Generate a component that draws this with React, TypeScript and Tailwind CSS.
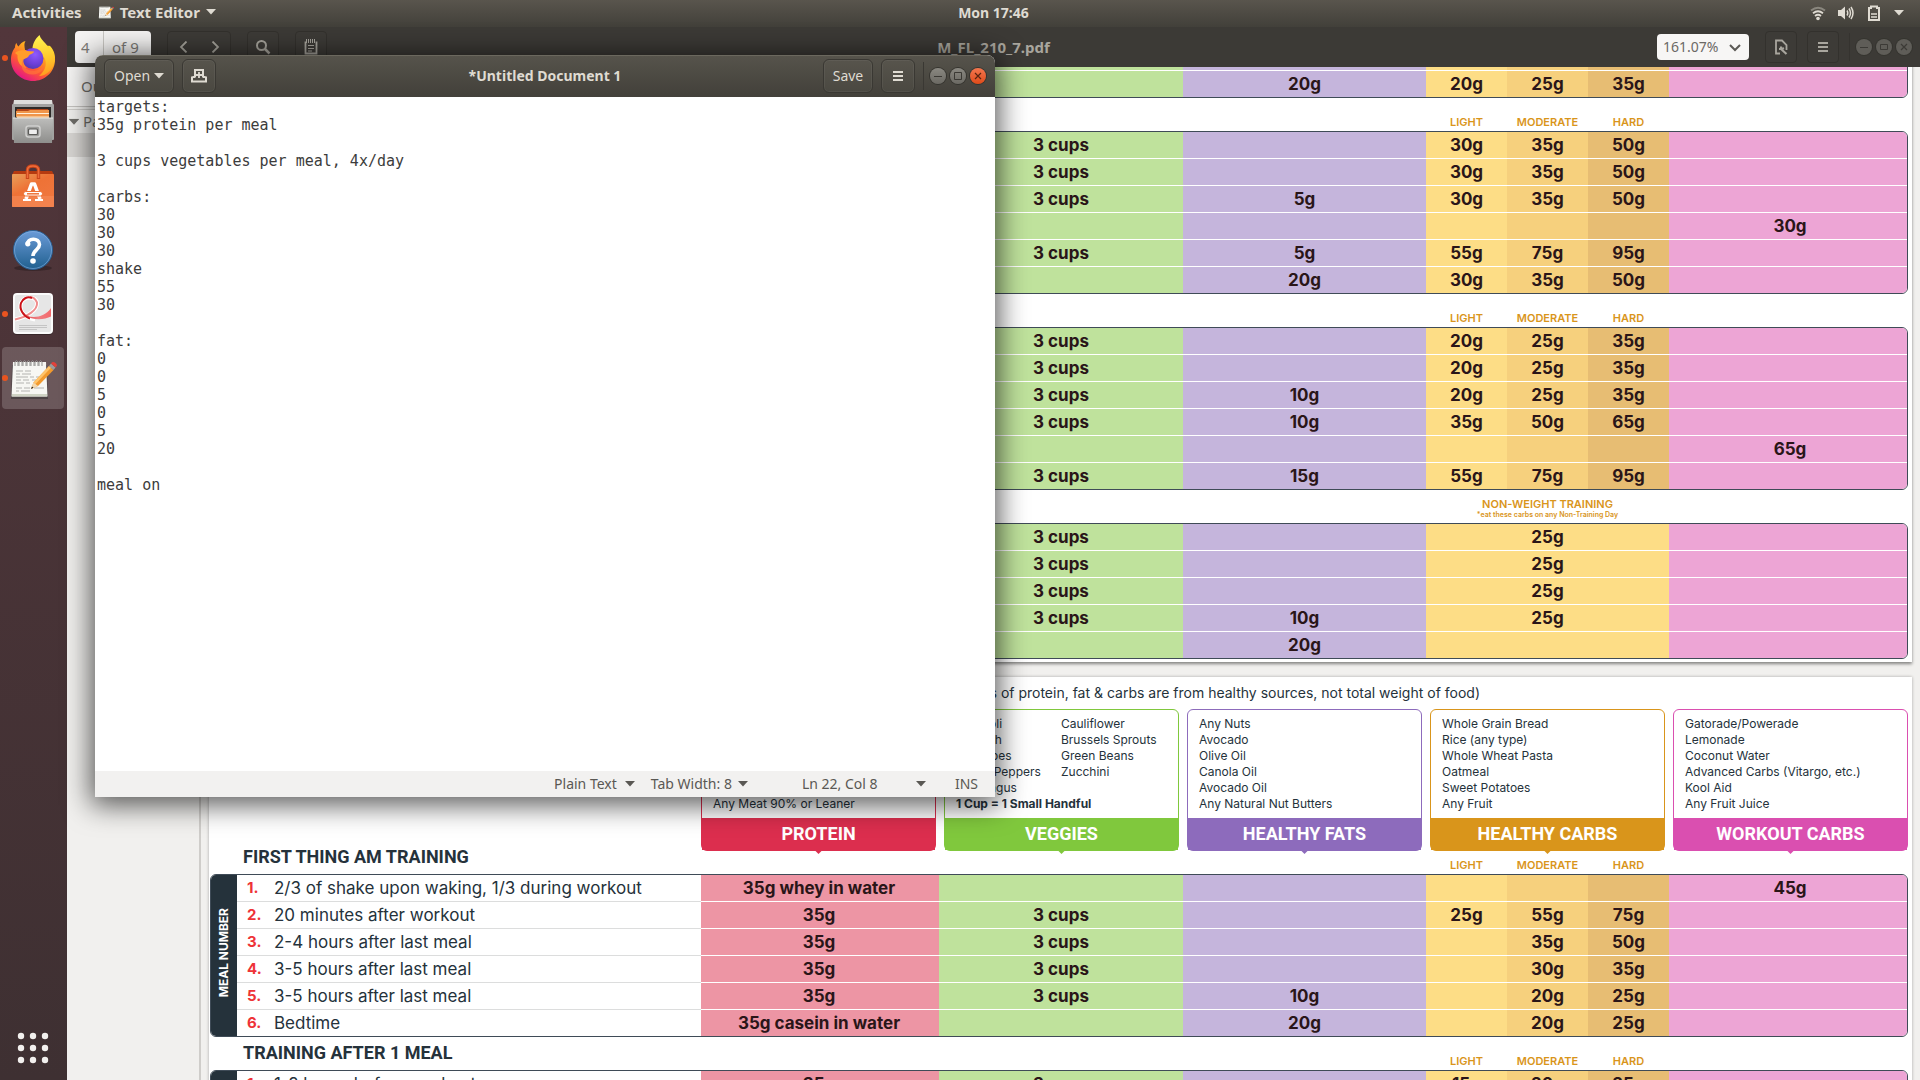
import React from "react";

const COLS =
  "grid-cols-[27px_minmax(0,1fr)_238px_244px_243px_81px_81px_81px_239px]";
const DISPLAY = "font-['Roboto',sans-serif] font-bold text-lg";

/* ---------- small shared pieces ---------- */

function Caret({ className = "" }: { className?: string }) {
  return (
    <svg viewBox="0 0 10 6" className={`h-1.5 w-2.5 ${className}`} aria-hidden="true">
      <path d="M0 0h10L5 5.500z" fill="currentColor" />
    </svg>
  );
}

function Menu() {
  return (
    <svg viewBox="0 0 10 10" className="size-2.5" aria-hidden="true">
      <path d="M0 0h10v2H0zM0 4h10v2H0zM0 8h10v2H0z" fill="currentColor" />
    </svg>
  );
}

function WindowButtons({ active }: { active: boolean }) {
  const dim = "bg-[#5f5d58] text-[#3c3a36] shadow-[0_0_0_1px_#35342f]";
  const lit = "bg-linear-to-b from-[#8a8881] to-[#6b6963] text-[#3b3934] shadow-[0_0_0_1px_#35342f]";
  const close = "bg-linear-to-b from-[#f4764d] to-[#df4a16] text-[#5b2410] shadow-[0_0_0_1px_#35342f]";
  const base = "flex size-4 items-center justify-center rounded-full";
  return (
    <div className="flex items-center gap-1">
      <button aria-label="Minimize" className={`${base} ${active ? lit : dim}`}>
        <svg viewBox="0 0 16 16" className="size-4" fill="none" stroke="currentColor">
          <path d="M4 8.500h8" />
        </svg>
      </button>
      <button aria-label="Maximize" className={`${base} ${active ? lit : dim}`}>
        <svg viewBox="0 0 16 16" className="size-4" fill="none" stroke="currentColor">
          {active ? <path d="M4.500 4.500h7v7h-7z" /> : <path d="M4.500 5.500h7v5h-7z" />}
        </svg>
      </button>
      <button aria-label="Close" className={`${base} ${active ? close : dim}`}>
        <svg viewBox="0 0 16 16" className="size-4" fill="none" stroke="currentColor" strokeWidth="1.200">
          <path d="M5 5l6 6M11 5l-6 6" />
        </svg>
      </button>
    </div>
  );
}

/* ---------- application icons ---------- */

function FirefoxIcon() {
  return (
    <svg viewBox="0 0 46 48" className="h-12 w-[46px]" aria-hidden="true">
      <defs>
        <linearGradient id="fxBody" x1="0.85" y1="0.1" x2="0.25" y2="0.95">
          <stop offset="0" stopColor="#ffe226" />
          <stop offset="0.35" stopColor="#ffa01f" />
          <stop offset="0.65" stopColor="#ff5a32" />
          <stop offset="1" stopColor="#e31587" />
        </linearGradient>
        <linearGradient id="fxFlame" x1="0.5" y1="0" x2="0.6" y2="1">
          <stop offset="0" stopColor="#fff44f" />
          <stop offset="0.6" stopColor="#ffc52b" />
          <stop offset="1" stopColor="#ff9a20" />
        </linearGradient>
        <radialGradient id="fxGlobe" cx="0.6" cy="0.3" r="0.8">
          <stop offset="0" stopColor="#9059ff" />
          <stop offset="0.6" stopColor="#6b3fd6" />
          <stop offset="1" stopColor="#4a3aa8" />
        </radialGradient>
      </defs>
      <path
        d="M1 26C1 20 3 16 5 13.500c0-2 .5-3.500 1.500-4.500.3 1.500 1 2.600 2 3.500 1.500-2.500 4-5 7-5.500-1 1.500-1.200 3-1 5.500l14-2 11.500 1.500c4 4 5.500 9 5 15-.8 11.500-10.500 20-22 20S1 38 1 26z"
        fill="url(#fxBody)"
      />
      <path d="M14.500 12.500C19 9 26 8 30 11l-2 5H15z" fill="#52363b" />
      <path
        d="M29.500 1c1 3.500 3.500 5.500 6 8.500 1.500 1.500 2.500 3.500 2.900 5 .6-.8.8-2 .6-3 4 4 6 9 5.500 15C43.500 36 36 42 29 42c6-5 8-11 6-17-2-5-8-7-12.500-8C22 10 25.500 4.500 29.500 1z"
        fill="url(#fxFlame)"
      />
      <circle cx="23" cy="24.500" r="10.500" fill="url(#fxGlobe)" />
      <path
        d="M5 19c3-3 8-3.500 12-2 2 .2 4.500.3 7 .5 0 2-4 2.600-5 4-.5 2-3 2.500-5.500 4-.7 3 .5 6 3 8.500C10 33 7 27 7.500 21z"
        fill="#ff9d2b"
      />
      <path d="M13 25c-1 8 5 13 13 11.500 4-.8 6-3 7-5.500 1 5-3 9-10 9.500C14 41 9 34 13 25z" fill="#ff7139" opacity=".75" />
    </svg>
  );
}

function FilesIcon() {
  return (
    <svg viewBox="0 0 44 46" className="h-[46px] w-11" aria-hidden="true">
      <defs>
        <linearGradient id="flBody" x1="0" y1="0" x2="0" y2="1">
          <stop offset="0" stopColor="#bdbdbb" />
          <stop offset="1" stopColor="#8e8e8c" />
        </linearGradient>
      </defs>
      <path d="M3 1h38l1 6H2z" fill="#dededc" />
      <rect x="1" y="5" width="42" height="36" rx="1" fill="#a3a3a1" />
      <rect x="4" y="8" width="36" height="12" fill="#2d2b29" />
      <path d="M6 10h31l1 3H5z" fill="#b2471a" />
      <path d="M5 12h12l2-1h19v7H5z" fill="#f0954a" />
      <path d="M6 14h32v1H6z" fill="#fff1dc" />
      <path d="M6 17h32v2H6z" fill="#f5c08a" />
      <path d="M2 19h40v1l-1 24H3z" fill="url(#flBody)" />
      <path d="M2 18.500h40v1H2z" fill="#e3e3e1" />
      <rect x="15" y="27" width="14" height="11" rx="2.500" fill="#9b9b99" stroke="#d0d0ce" strokeWidth="1.500" />
      <rect x="17.500" y="30" width="9" height="5.500" rx="1" fill="#eee" stroke="#5b5b59" strokeWidth="1.200" />
    </svg>
  );
}

function SoftwareIcon() {
  return (
    <svg viewBox="0 0 44 46" className="h-[46px] w-11" aria-hidden="true">
      <defs>
        <linearGradient id="swBody" x1="0" y1="0" x2="0.7" y2="1">
          <stop offset="0" stopColor="#e9a05a" />
          <stop offset="0.45" stopColor="#ee7236" />
          <stop offset="1" stopColor="#f0773f" />
        </linearGradient>
      </defs>
      <path d="M3 8h38l2 4H1z" fill="#b63a10" />
      <rect x="1" y="11" width="42" height="33" rx="1" fill="url(#swBody)" />
      <path d="M1 33h42v11H1z" fill="#f58a58" opacity=".6" />
      <path d="M16.500 16V7q0-4 5.500-4t5.500 4v9" fill="none" stroke="#c8451a" strokeWidth="3.400" />
      <path d="M16.500 15V7q0-4 5.500-4t5.500 4v8" fill="none" stroke="#ef6c3a" strokeWidth="1.500" />
      <path d="M15 36l5.500-15h3L29 36" fill="none" stroke="#fff" strokeWidth="3.600" strokeLinejoin="round" />
      <rect x="12.500" y="28.500" width="19" height="4.500" rx="2.200" fill="#fff" stroke="#ee7236" />
      <path d="M16 30.800h12" stroke="#ee7236" strokeWidth="1.500" />
      <path d="M12 37h8M24 37h8" stroke="#fff" strokeWidth="2" />
    </svg>
  );
}

function HelpIcon() {
  return (
    <svg viewBox="0 0 44 44" className="size-11" aria-hidden="true">
      <defs>
        <linearGradient id="hpBody" x1="0" y1="0" x2="0" y2="1">
          <stop offset="0" stopColor="#6b9bd8" />
          <stop offset="1" stopColor="#20608f" />
        </linearGradient>
      </defs>
      <ellipse cx="22" cy="40" rx="19" ry="3" fill="#000" opacity=".25" />
      <circle cx="22" cy="22" r="19.500" fill="url(#hpBody)" stroke="#2a5f92" />
      <circle cx="22" cy="22" r="18.500" fill="none" stroke="#8bb6e6" strokeWidth=".8" opacity=".7" />
      <path d="M16.500 16.500c-.8-6.500 12-7.500 12 0 0 5.200-6.500 5.500-6.500 11.500" fill="none" stroke="#fff" strokeWidth="3.600" />
      <circle cx="16.800" cy="15.800" r="2.600" fill="#fff" />
      <circle cx="22" cy="33" r="2.800" fill="#fff" />
    </svg>
  );
}

function ViewerIcon() {
  return (
    <svg viewBox="0 0 44 44" className="size-11" aria-hidden="true">
      <defs>
        <linearGradient id="pdRibbon" x1="0" y1="0" x2="1" y2="0">
          <stop offset="0" stopColor="#e0474b" />
          <stop offset=".5" stopColor="#ee7f82" />
          <stop offset="1" stopColor="#f4696c" />
        </linearGradient>
      </defs>
      <rect x="2" y="2" width="40" height="41" rx="4" fill="#2a1e20" opacity=".6" />
      <rect x="2" y="1" width="40" height="41" rx="4" fill="#fbfbfb" />
      <rect x="4" y="3" width="36" height="37" rx="2" fill="#e6e6e6" />
      <path
        d="M4 27.500C16 25 27 18 26 10.500 24.500 4 13 4 10 11c-2.500 7 3 15 14 16.500"
        fill="none"
        stroke="#fff"
        strokeWidth="4"
      />
      <path d="M4 27.500C16 25 27 18 26 10.500 24.500 7 22 5 19 5" fill="none" stroke="#f08d8d" strokeWidth="2" />
      <path d="M21 6C16 4 11.500 7 10 11c-2 6 2 13 9 15.500" fill="none" stroke="#cc1218" strokeWidth="2" />
      <path d="M14 23c8 4 20 2 26-7v8.500c-7 3.500-19 4-26-1.500z" fill="url(#pdRibbon)" />
      <path d="M8 33.500h28M8 35.500h28M8 37.500h18" stroke="#c4c4c4" />
    </svg>
  );
}

function EditorIcon({ className = "size-12" }: { className?: string }) {
  return (
    <svg viewBox="0 0 48 48" className={className} aria-hidden="true">
      <path d="M3 11h35l1 34H2z" fill="#333" opacity=".55" />
      <path d="M4 8h33l1.500 34.500H2.500z" fill="#f7f7f3" />
      <path d="M3 40h35v2.500H3z" fill="#cfd3c4" />
      <path
        d="M7 17h7m2 0h6M7 20h4m2 0h9M7 23h12m2 0h4m2 0h5M7 26h5m2 0h6m3 0h4M7 29h8m2 0h4M7 34h6m2 0h6m4 0h10M7 37h3m2 0h9"
        stroke="#b3b3b0"
      />
      <path
        d="M6 12V8q1.500-3 3 0v4M10 12V8q1.500-3 3 0v4M14 12V8q1.500-3 3 0v4M18 12V8q1.500-3 3 0v4M22 12V8q1.500-3 3 0v4M26 12V8q1.500-3 3 0v4M30 12V8q1.500-3 3 0v4"
        fill="none"
        stroke="#8f8f8c"
      />
      <path d="M22 35l2.500-6.500L40 12l4.500 4L29 32z" fill="#f29a2e" />
      <path d="M24.500 28.500L40 12l2 1.700L26.500 30z" fill="#ffc46a" />
      <path d="M22 35l2.500-6.500L29 32z" fill="#f3d9b0" />
      <path d="M22 35l1-2.500 1.500 1.300z" fill="#222" />
      <path d="M40 12l2-2.500 4.500 4-2 2.500z" fill="#9c9c9c" />
      <path d="M42 9.500q2-2.500 4.500-.5t.2 4.500z" fill="#e3413a" />
    </svg>
  );
}

/* ---------- desktop chrome ---------- */

function TopBar() {
  return (
    <header className="grid h-[27px] shrink-0 grid-cols-[67px_1fr_auto_1fr] items-center bg-linear-to-b from-[#59554d] to-[#42403a] pb-0.5 text-sm font-bold text-[#dfdbd2]">
      <div className="col-span-2 flex items-center pl-3 text-[15px]">
        <button>Activities</button>
        <button className="ml-4 flex items-center gap-1.5">
          <EditorIcon className="size-4" />
          <span>Text Editor</span>
          <Caret />
        </button>
      </div>
      <button className="px-2">Mon 17:46</button>
      <button aria-label="System menu" className="flex items-center gap-3 justify-self-end pr-4">
        <svg viewBox="0 0 16 16" className="size-4" fill="none" stroke="currentColor" strokeWidth="1.800">
          <path d="M1 5.500q7-5.500 14 0" opacity=".4" />
          <path d="M3 8.200q5-4 10 0" />
          <path d="M5 11q3-2.400 6 0" />
          <circle cx="8" cy="13.500" r="1.800" fill="currentColor" stroke="none" />
        </svg>
        <svg viewBox="0 0 16 16" className="size-4" fill="none" stroke="currentColor" strokeWidth="1.500">
          <path d="M0 5h3l4-3.500v13L3 11H0z" fill="currentColor" stroke="none" />
          <path d="M9 5.500q1.500 2.500 0 5M11 3.500q3 4.500 0 9M13 2q4 6 0 12" />
        </svg>
        <svg viewBox="0 0 16 16" className="size-4" fill="none" stroke="currentColor">
          <path d="M3 3h2V1.500h6V3h2v12H3z" strokeWidth="2" />
          <path d="M5 9h6M5 12h6" strokeWidth="1.500" />
        </svg>
        <Caret />
      </button>
    </header>
  );
}

const DOCK = [
  { name: "Firefox Web Browser", icon: <FirefoxIcon />, running: true },
  { name: "Files", icon: <FilesIcon />, running: false },
  { name: "Ubuntu Software", icon: <SoftwareIcon />, running: false },
  { name: "Help", icon: <HelpIcon />, running: false },
  { name: "Document Viewer", icon: <ViewerIcon />, running: true },
  { name: "Text Editor", icon: <EditorIcon />, running: true, active: true },
];

function Dock() {
  return (
    <nav aria-label="Dock" className="flex w-[67px] shrink-0 flex-col gap-0.5 bg-linear-to-b from-[#52363b] to-[#3e3032] px-0.5">
      {DOCK.map((app) => (
        <button
          key={app.name}
          aria-label={app.name}
          className={`flex h-[62px] w-[62px] items-center rounded ${app.active ? "bg-white/18" : ""}`}
        >
          <span className={`-mr-1.5 size-1.5 shrink-0 rounded-full ${app.running ? "bg-[#e95420]" : ""}`} />
          <span className="flex flex-1 justify-center">{app.icon}</span>
        </button>
      ))}
      <button aria-label="Show Applications" className="mt-auto flex h-16 w-[62px] items-center justify-center">
        <svg viewBox="0 0 32 32" className="size-8" fill="#f2f0ee">
          {[4, 16, 28].map((y) =>
            [4, 16, 28].map((x) => <circle key={`${x}-${y}`} cx={x} cy={y} r="3.200" />)
          )}
        </svg>
      </button>
    </nav>
  );
}

/* ---------- document viewer ---------- */

function ViewerHeader() {
  const btn =
    "flex h-8 items-center justify-center rounded border border-[#33312d] bg-[#3d3b37] text-[#a9a69e]";
  return (
    <div className="grid h-10 shrink-0 grid-cols-[1fr_auto_1fr] items-center bg-[#3c3a36] px-2">
      <div className="flex items-center">
        <div className="flex h-8 w-[76px] items-center rounded bg-[#f4f3f2] text-[15px] text-[#7d7b77]">
          <input
            aria-label="Page"
            defaultValue="4"
            className="h-full w-[29px] border-r border-[#c9c7c3] pl-1.5 outline-none"
          />
          <span className="pl-2">of 9</span>
        </div>
        <div className={`ml-4 w-16 ${btn}`}>
          <button aria-label="Previous page" className="flex flex-1 justify-center">
            <svg viewBox="0 0 12 12" className="size-3" fill="none" stroke="currentColor" strokeWidth="1.800">
              <path d="M8.500.5L3 6l5.500 5.500" />
            </svg>
          </button>
          <button aria-label="Next page" className="flex flex-1 justify-center">
            <svg viewBox="0 0 12 12" className="size-3" fill="none" stroke="currentColor" strokeWidth="1.800">
              <path d="M3.500.5L9 6l-5.500 5.500" />
            </svg>
          </button>
        </div>
        <button aria-label="Find" className={`ml-4 w-8 ${btn}`}>
          <svg viewBox="0 0 16 16" className="size-4" fill="none" stroke="currentColor" strokeWidth="2">
            <circle cx="6.500" cy="6.500" r="4.500" />
            <path d="M10 10l4.500 4.500" strokeWidth="2.500" />
          </svg>
        </button>
        <button aria-label="Annotate" className={`ml-4 w-8 ${btn}`}>
          <svg viewBox="0 0 16 18" className="h-[18px] w-4" fill="none" stroke="currentColor">
            <path d="M2.500 3.500v12h11v-12" strokeWidth="1.800" />
            <path d="M3.500 1v4M5.500 1v4M7.500 1v4M9.500 1v4M11.500 1v4M5 7.500h6M5 10.500h6M5 13h4" />
          </svg>
        </button>
      </div>
      <h1 className="text-[15px] font-bold text-[#a9a69e]">M_FL_210_7.pdf</h1>
      <div className="flex items-center justify-self-end">
        <div className="relative">
          <select
            aria-label="Zoom"
            className="h-[26px] w-[92px] appearance-none rounded bg-[#f7f6f5] pl-1.5 text-sm text-[#6b6965] outline-none"
          >
            <option>161.07%</option>
          </select>
          <svg viewBox="0 0 12 8" className="pointer-events-none absolute top-2.5 right-2 h-2 w-3" fill="none" stroke="#5b5955" strokeWidth="2">
            <path d="M1 1l5 5 5-5" />
          </svg>
        </div>
        <button aria-label="Document properties" className={`ml-4 w-8 ${btn}`}>
          <svg viewBox="0 0 16 16" className="size-4" fill="none" stroke="currentColor">
            <path d="M7 14.500H3V1.500h6l4.500 4.500v5" strokeWidth="1.800" />
            <path d="M8 7.500v2.500h-2M8 10l5.500 5" strokeWidth="2.200" />
            <path d="M9.500 8.500l1 2" strokeWidth="2" />
          </svg>
        </button>
        <button aria-label="Viewer menu" className={`mr-2.5 ml-2.5 w-8 ${btn}`}>
          <Menu />
        </button>
        <div className="mr-1.5 h-7 w-px bg-[#35332f]" />
        <WindowButtons active={false} />
      </div>
    </div>
  );
}

function ViewerSidebar() {
  return (
    <aside className="w-[134px] shrink-0 border-r-2 border-[#cfcdca] bg-[#f1f0ee] text-[15px] text-[#6f6d69]">
      <div className="flex h-10 items-center border-b border-[#c5c3c0] bg-[#f6f5f4] pl-3.5">Outline</div>
      <div className="mt-0.5 flex h-6 items-center gap-1 border-t border-[#cfcdca] pl-0.5">
        <Caret className="scale-110" />
        <span>Pages</span>
      </div>
      <div className="h-6 bg-[#d9d7d4]" />
    </aside>
  );
}

/* Carb cells are ordered light, moderate, hard; a single-column plan uses only the first. */
type Row = { meal?: string; protein?: string; veg?: boolean; fat?: string; carbs: string[]; workout?: string };

function PlanTable({ label, rows, single = false }: { label: string; rows: Row[]; single?: boolean }) {
  const shades = ["bg-[#fddd86]", "bg-[#f6d07d]", "bg-[#e7bd73]"];
  return (
    <div className="overflow-hidden rounded-md border border-[#3f4b57]">
      <table aria-label={label} className="w-full table-fixed border-separate border-spacing-0 text-center text-[17px]/[24px] font-bold text-[#2a1518]">
        <colgroup>
          <col className="w-[26px]" />
          <col />
          <col className="w-[238px]" />
          <col className="w-[244px]" />
          <col className="w-[243px]" />
          <col className="w-[81px]" />
          <col className="w-[81px]" />
          <col className="w-[81px]" />
          <col className="w-[238px]" />
        </colgroup>
        <tbody>
          {rows.map((r, i) => {
            const last = i === rows.length - 1;
            const line = last ? "" : "border-b border-white";
            return (
              <tr key={i} className={last ? "h-[26px]" : "h-[27px]"}>
                {i === 0 && (
                  <th rowSpan={rows.length} className="bg-[#25323b] p-0 align-middle">
                    {rows.length > 2 && (
                      <span className="inline-block rotate-180 text-xs/[26px] font-bold whitespace-nowrap text-white [writing-mode:vertical-rl]">
                        MEAL NUMBER
                      </span>
                    )}
                  </th>
                )}
                <td className={`bg-white p-0 pl-2.5 text-left font-normal text-[#25323b] ${last ? "" : "border-b border-[#dcdddd]"}`}>
                  {r.meal && (
                    <div className="flex">
                      <span className="w-[27px] text-[15px] font-bold text-[#ee3338]">{i + 1}.</span>
                      <span>{r.meal}</span>
                    </div>
                  )}
                </td>
                <td className={`bg-[#ed95a4] p-0 pr-0.5 ${line}`}>{r.protein}</td>
                <td className={`bg-[#bfe29c] p-0 ${line}`}>{r.veg ? "3 cups" : ""}</td>
                <td className={`bg-[#c5b5dc] p-0 ${line}`}>{r.fat}</td>
                {single ? (
                  <td colSpan={3} className={`bg-[#fddd86] p-0 ${line}`}>{r.carbs[0]}</td>
                ) : (
                  shades.map((shade, n) => (
                    <td key={n} className={`p-0 ${shade} ${line}`}>{r.carbs[n]}</td>
                  ))
                )}
                <td className={`bg-[#eda5d5] p-0 pl-1 ${line}`}>{r.workout}</td>
              </tr>
            );
          })}
        </tbody>
      </table>
    </div>
  );
}

function SectionHead({ title = "", single = false }: { title?: string; single?: boolean }) {
  return (
    <div className={`grid h-[33px] ${COLS}`}>
      <h2 className={`col-span-2 pt-0.5 pl-[33px] leading-7 text-[#25323b] ${DISPLAY}`}>{title}</h2>
      <div className="col-span-3" />
      {single ? (
        <div className="col-span-3 flex flex-col items-center justify-end pb-1 font-semibold text-[#d9951b]">
          <span className="text-[11px]/[14px]">NON-WEIGHT TRAINING</span>
          <span className="text-[7px]/[8px]">*eat these carbs on any Non-Training Day</span>
        </div>
      ) : (
        ["LIGHT", "MODERATE", "HARD"].map((t) => (
          <span key={t} className="self-end pb-0.5 text-center text-[11px]/[14px] font-semibold text-[#d9951b]">
            {t}
          </span>
        ))
      )}
    </div>
  );
}

function FoodCard({ title, items, extra, note, border, fill }: {
  title: string; items: string[]; extra?: string[]; note?: string; border: string; fill: string;
}) {
  return (
    <section className={`relative flex h-[142px] flex-col rounded-md border ${border} text-xs/[16px] text-[#25323b]`}>
      <div className="flex flex-1 flex-col pt-1.5 pl-[11px]">
        <div className="grid grid-cols-[105px_1fr]">
          <ul className={extra ? "" : "col-span-2"}>
            {items.map((t) => <li key={t}>{t}</li>)}
          </ul>
          {extra && <ul>{extra.map((t) => <li key={t}>{t}</li>)}</ul>}
        </div>
        {note && <p className="font-bold">{note}</p>}
      </div>
      <h3 className={`flex h-8 items-center justify-center text-white ${fill} ${DISPLAY}`}>{title}</h3>
      <div className={`absolute top-full left-1/2 -ml-1 h-1 w-2 [clip-path:polygon(0_0,100%_0,50%_100%)] ${fill}`} />
    </section>
  );
}

const TABLE_A: Row[] = [
  { carbs: [] },
  { fat: "20g", carbs: ["20g", "25g", "35g"] },
];
const TABLE_B: Row[] = [
  { veg: true, carbs: ["30g", "35g", "50g"] },
  { veg: true, carbs: ["30g", "35g", "50g"] },
  { veg: true, fat: "5g", carbs: ["30g", "35g", "50g"] },
  { carbs: [], workout: "30g" },
  { veg: true, fat: "5g", carbs: ["55g", "75g", "95g"] },
  { fat: "20g", carbs: ["30g", "35g", "50g"] },
];
const TABLE_C: Row[] = [
  { veg: true, carbs: ["20g", "25g", "35g"] },
  { veg: true, carbs: ["20g", "25g", "35g"] },
  { veg: true, fat: "10g", carbs: ["20g", "25g", "35g"] },
  { veg: true, fat: "10g", carbs: ["35g", "50g", "65g"] },
  { carbs: [], workout: "65g" },
  { veg: true, fat: "15g", carbs: ["55g", "75g", "95g"] },
];
const TABLE_D: Row[] = [
  { veg: true, carbs: ["25g"] },
  { veg: true, carbs: ["25g"] },
  { veg: true, carbs: ["25g"] },
  { veg: true, fat: "10g", carbs: ["25g"] },
  { fat: "20g", carbs: [] },
];
const FIRST_THING: Row[] = [
  { meal: "2/3 of shake upon waking, 1/3 during workout", protein: "35g whey in water", carbs: [], workout: "45g" },
  { meal: "20 minutes after workout", protein: "35g", veg: true, carbs: ["25g", "55g", "75g"] },
  { meal: "2-4 hours after last meal", protein: "35g", veg: true, carbs: ["", "35g", "50g"] },
  { meal: "3-5 hours after last meal", protein: "35g", veg: true, carbs: ["", "30g", "35g"] },
  { meal: "3-5 hours after last meal", protein: "35g", veg: true, fat: "10g", carbs: ["", "20g", "25g"] },
  { meal: "Bedtime", protein: "35g casein in water", fat: "20g", carbs: ["", "20g", "25g"] },
];
const AFTER_ONE: Row[] = [
  { meal: "1-2 hours before workout", protein: "35g", veg: true, carbs: ["15g", "20g", "25g"] },
  { carbs: [] },
];

function DocumentPages() {
  return (
    <div className="min-w-0 flex-1 overflow-hidden bg-[#f1f0ee] px-2 font-['Inter',sans-serif]">
      <article className="-mt-6 bg-white pr-1 pb-[3px] pl-px shadow-[0_2px_3px_rgba(0,0,0,0.45)]">
        <PlanTable label="Plan, continued" rows={TABLE_A} />
        <SectionHead />
        <PlanTable label="Training after 2 meals" rows={TABLE_B} />
        <SectionHead />
        <PlanTable label="Training after 3 meals" rows={TABLE_C} />
        <SectionHead single />
        <PlanTable label="Non-weight training" rows={TABLE_D} single />
      </article>
      <article className="mt-[15px] bg-white pr-1 pl-px shadow-[0_0_3px_rgba(0,0,0,0.3)]">
        <p className="flex h-8 items-center justify-end pr-[428px] text-sm text-[#25323b]">
          (grams of protein, fat &amp; carbs are from healthy sources, not total weight of food)
        </p>
        <div className="ml-auto grid w-[1207px] grid-cols-5 gap-2">
          <FoodCard title="PROTEIN" border="border-[#dc2e4e]" fill="bg-[#dc2e4e]"
            items={["Chicken", "Turkey", "Fish", "Egg Whites", "Lean Beef", "Any Meat 90% or Leaner"]} />
          <FoodCard title="VEGGIES" border="border-[#80c83d]" fill="bg-[#80c83d]"
            items={["Broccoli", "Spinach", "Tomatoes", "Green Peppers", "Asparagus"]}
            extra={["Cauliflower", "Brussels Sprouts", "Green Beans", "Zucchini"]}
            note="1 Cup = 1 Small Handful" />
          <FoodCard title="HEALTHY FATS" border="border-[#8d6bbc]" fill="bg-[#8d6bbc]"
            items={["Any Nuts", "Avocado", "Olive Oil", "Canola Oil", "Avocado Oil", "Any Natural Nut Butters"]} />
          <FoodCard title="HEALTHY CARBS" border="border-[#d9951b]" fill="bg-[#d9951b]"
            items={["Whole Grain Bread", "Rice (any type)", "Whole Wheat Pasta", "Oatmeal", "Sweet Potatoes", "Any Fruit"]} />
          <FoodCard title="WORKOUT CARBS" border="border-[#da4fb0]" fill="bg-[#da4fb0]"
            items={["Gatorade/Powerade", "Lemonade", "Coconut Water", "Advanced Carbs (Vitargo, etc.)", "Kool Aid", "Any Fruit Juice"]} />
        </div>
        <div className="-mt-2.5">
          <SectionHead title="FIRST THING AM TRAINING" />
        </div>
        <PlanTable label="First thing AM training" rows={FIRST_THING} />
        <SectionHead title="TRAINING AFTER 1 MEAL" />
        <PlanTable label="Training after 1 meal" rows={AFTER_ONE} />
      </article>
    </div>
  );
}

/* ---------- text editor window ---------- */

const NOTES = `targets:
35g protein per meal

3 cups vegetables per meal, 4x/day

carbs:
30
30
30
shake
55
30

fat:
0
0
5
0
5
20

meal on`;

function EditorWindow() {
  const btn =
    "flex h-[34px] items-center justify-center rounded-md border border-[#3a3833] bg-linear-to-b from-[#57544c] to-[#4a4841] shadow-[inset_0_0_0_1px_rgba(255,255,255,0.05)]";
  return (
    <section
      aria-label="Text Editor"
      className="absolute top-[55px] left-[95px] flex h-[742px] w-[900px] flex-col overflow-hidden rounded-t-lg bg-white shadow-[0_4px_28px_4px_rgba(0,0,0,0.65)]"
    >
      <header className="grid h-[42px] shrink-0 grid-cols-[1fr_auto_1fr] items-center border-t border-[#6b685e] bg-linear-to-b from-[#56534b] to-[#42403a] px-[9px] pb-0.5 text-sm text-[#dfdbd2]">
        <div className="flex items-center gap-2">
          <button className={`w-[70px] gap-1 ${btn}`}>
            Open <Caret />
          </button>
          <button aria-label="New document" className={`w-[34px] ${btn}`}>
            <svg viewBox="0 0 16 16" className="size-4" fill="none" stroke="currentColor" strokeWidth="2">
              <path d="M4 9V2h8v7M1 13.500h14M1.500 9h3M11.500 9h3M1 8.500v6M15 8.500v6" />
              <path d="M8 4v6M5 7h6" strokeWidth="1.800" />
            </svg>
          </button>
        </div>
        <h1 className="font-bold">*Untitled Document 1</h1>
        <div className="flex items-center justify-self-end">
          <button className={`w-[50px] ${btn}`}>Save</button>
          <button aria-label="Editor menu" className={`ml-2 w-[34px] ${btn}`}>
            <Menu />
          </button>
          <div className="mr-1.5 ml-2 h-7 w-px bg-[#3a3833]" />
          <WindowButtons active />
        </div>
      </header>
      <textarea
        aria-label="Document text"
        spellCheck={false}
        defaultValue={NOTES}
        className="w-full flex-1 resize-none bg-white px-0.5 pt-px font-['DejaVu_Sans_Mono',monospace] text-[15px]/[18px] text-[#3c3c3c] outline-none"
      />
      <footer className="flex h-[26px] shrink-0 items-center justify-end bg-[#f2f1f0] pr-[17px] text-sm text-[#5a5854]">
        <button className="flex items-center gap-2">Plain Text <Caret /></button>
        <button className="ml-4 flex items-center gap-1.5">Tab Width: 8 <Caret /></button>
        <button className="ml-[54px] flex w-[124px] items-center justify-between">Ln 22, Col 8 <Caret /></button>
        <span className="ml-[29px]">INS</span>
      </footer>
    </section>
  );
}

export default function App() {
  return (
    <div className="relative flex h-screen flex-col overflow-hidden font-['Noto_Sans',sans-serif]">
      <TopBar />
      <div className="flex min-h-0 flex-1">
        <Dock />
        <main className="flex min-w-0 flex-1 flex-col">
          <ViewerHeader />
          <div className="flex min-h-0 flex-1">
            <ViewerSidebar />
            <DocumentPages />
          </div>
        </main>
      </div>
      <EditorWindow />
    </div>
  );
}
